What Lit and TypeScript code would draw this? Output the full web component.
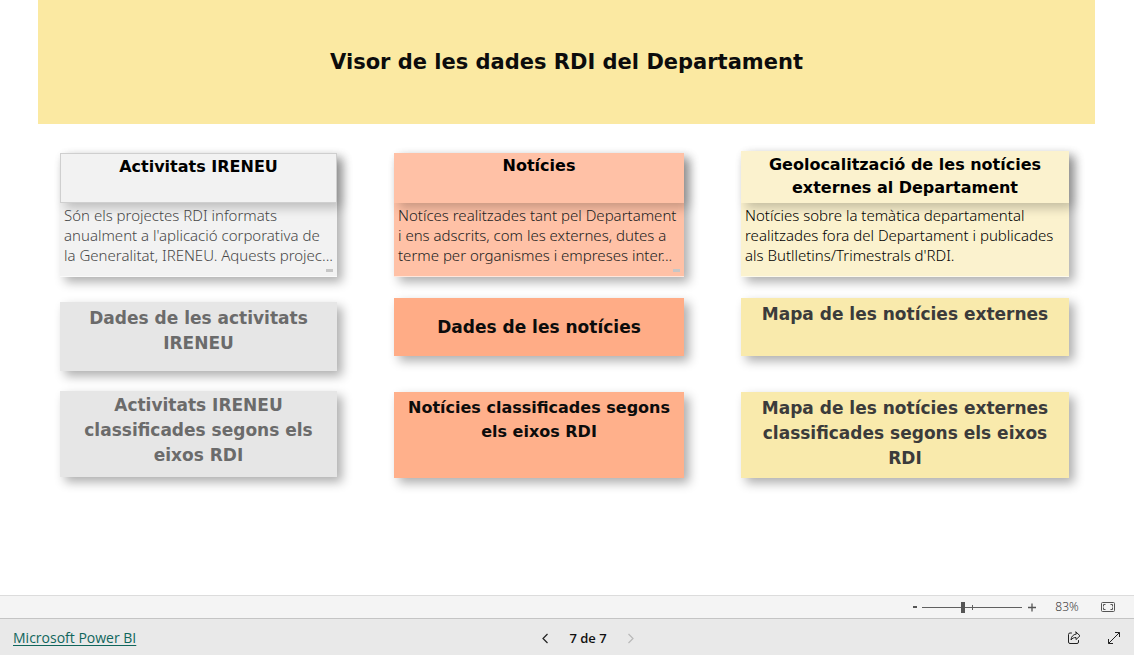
import { LitElement, html, css, svg } from "lit";
import { customElement, property, state } from "lit/decorators.js";
import { classMap } from "lit/directives/class-map.js";

interface Topic {
  tone: string;
  title: string;
  text: string;
  clipped: boolean;
  pages: string[];
}

const TOPICS: Topic[] = [
  {
    tone: "grey",
    title: "Activitats IRENEU",
    text: "Són els projectes RDI informats\nanualment a l'aplicació corporativa de\nla Generalitat, IRENEU. Aquests projec...",
    clipped: true,
    pages: ["Dades de les activitats IRENEU", "Activitats IRENEU classificades segons els eixos RDI"],
  },
  {
    tone: "orange",
    title: "Notícies",
    text: "Notíces realitzades tant pel Departament\ni ens adscrits, com les externes, dutes a\nterme per organismes i empreses inter...",
    clipped: true,
    pages: ["Dades de les notícies", "Notícies classificades segons els eixos RDI"],
  },
  {
    tone: "yellow",
    title: "Geolocalització de les notícies externes al Departament",
    text: "Notícies sobre la temàtica departamental\nrealitzades fora del Departament i publicades\nals Butlletins/Trimestrals d'RDI.",
    clipped: false,
    pages: ["Mapa de les notícies externes", "Mapa de les notícies externes classificades segons els eixos RDI"],
  },
];

@customElement("topic-column")
class TopicColumn extends LitElement {
  @property({ attribute: false }) topic!: Topic;

  static styles = css`
    :host { display: block; min-width: 0; }
    .column { display: flex; flex-direction: column; height: 100%; }
    .summary, .page { box-shadow: 5px 5px 10px rgba(0, 0, 0, 0.32); }
    .summary { display: flex; flex-direction: column; margin-top: 2px; border-bottom: 1px solid rgba(255, 255, 255, 0.6); }
    .title {
      position: relative;
      box-sizing: border-box;
      margin: 0;
      min-height: 50px;
      padding: 2px 12px;
      text-align: center;
      font: 700 16px/23px "DejaVu Sans", Verdana, sans-serif;
      color: #000;
      box-shadow: 5px 5px 10px rgba(0, 0, 0, 0.22);
    }
    .text {
      margin: 0;
      padding: 2px 0 0 4px;
      font: 300 15px/20px "Noto Sans", "Segoe UI", sans-serif;
      white-space: pre-line;
    }
    .foot { display: flex; justify-content: flex-end; height: 11px; padding: 0 4px; }
    .mark { width: 7px; height: 3px; margin-top: 4px; background: #c6c6c6; }
    .page {
      display: flex;
      align-items: flex-start;
      justify-content: center;
      width: 100%;
      border: 0;
      padding: 4px 16px;
      text-align: center;
      font: 700 17px/25px "DejaVu Sans", Verdana, sans-serif;
      cursor: pointer;
    }
    .first { margin-top: 21px; height: 58px; }
    .second { margin-top: 36px; height: 86px; }

    .grey .summary { background: #f2f2f2; }
    .grey .title { background: #f2f2f2; border: 1px solid #cfcfcf; padding: 1px 12px; }
    .grey .text { color: #484848; }
    .grey .page { background: #e6e6e6; color: #6b6b6b; }
    .grey .first { margin-top: 25px; height: 69px; }
    .grey .second { margin-top: 20px; padding-top: 2px; }

    .orange .summary, .orange .title { background: #ffc1a6; }
    .orange .title { padding-top: 1px; }
    .orange .text { color: #222; }
    .orange .page { background: #ffac86; color: #0c0c0c; }
    .orange .first { align-items: center; }
    .orange .second { padding: 4px 8px; background: #ffb08b; font-size: 16px; line-height: 24px; }

    .yellow .summary { margin-top: 0; background: #fbf2ce; }
    .yellow .title { min-height: 52px; background: #fbf2ce; }
    .yellow .text { color: #000; }
    .yellow .page { background: #f9eaac; color: #3b3b3b; }
  `;

  render() {
    const t = this.topic;
    return html`
      <section class=${classMap({ column: true, [t.tone]: true })}>
        <div class="summary">
          <h2 class="title">${t.title}</h2>
          <p class="text">${t.text}</p>
          <div class="foot">${t.clipped ? html`<span class="mark"></span>` : ""}</div>
        </div>
        <button class="page first">${t.pages[0]}</button>
        <button class="page second">${t.pages[1]}</button>
      </section>
    `;
  }
}

const chevronLeft = svg`<path d="M7.500 2 3 6.500l4.500 4.500" />`;
const chevronRight = svg`<path d="M3.500 2 8 6.500 3.500 11" />`;

@customElement("app-root")
class AppRoot extends LitElement {
  @state() private zoom = 83;

  static styles = css`
    :host {
      display: flex;
      flex-direction: column;
      min-height: 100vh;
      background: #fff;
      font: 14px/20px "Open Sans", "Segoe UI", sans-serif;
    }
    .report { flex: 1; padding: 0 39px 0 38px; }
    .banner { display: flex; align-items: center; justify-content: center; height: 124px; background: #fbe9a2; }
    .banner h1 { margin: 0; font: 700 21px/28px "DejaVu Sans", Verdana, sans-serif; color: #0c0c0c; }
    .topics { display: grid; grid-template-columns: 277fr 290fr 328fr; gap: 57px; padding: 27px 26px 24px 22px; }
    button { font: inherit; }

    .zoombar {
      display: flex;
      align-items: center;
      justify-content: flex-end;
      height: 22px;
      padding-right: 18px;
      border-top: 1px solid #dcdcdc;
      background: #f4f4f4;
      color: #555;
    }
    .icon { display: flex; align-items: center; justify-content: center; padding: 0; border: 0; background: none; color: #222; cursor: pointer; }
    .step { width: 10px; height: 20px; color: #555; }
    .track { position: relative; display: flex; width: 100px; margin: 0 5px 0 2px; }
    .track::after { content: ""; position: absolute; left: 50px; top: 8px; width: 1px; height: 5px; background: #606060; }
    input { appearance: none; width: 100%; height: 20px; margin: 0; background: none; }
    input::-webkit-slider-runnable-track { height: 1px; background: #606060; }
    input::-webkit-slider-thumb { appearance: none; width: 4px; height: 11px; margin-top: -5px; background: #555; }
    .percent { width: 40px; margin: 0 14px 0 10px; text-align: center; font-size: 12px; font-weight: 300; color: #222; }

    .footer {
      display: grid;
      grid-template-columns: 1fr auto 1fr;
      align-items: center;
      height: 34px;
      padding: 2px 13px 0;
      border-top: 1px solid #c4c4c4;
      background: #e9e9e9;
    }
    .brand { color: #10665c; justify-self: start; text-underline-offset: 2px; }
    .pager { display: flex; align-items: center; gap: 18px; padding-left: 42px; }
    .count { font-size: 13px; font-weight: 600; color: #111; }
    .icon:disabled { color: #b9b9b9; }
    .tools { display: flex; justify-content: flex-end; gap: 26px; }
    svg { display: block; fill: none; stroke: currentColor; }
  `;

  private onZoom(e: Event) {
    this.zoom = Math.round(Number((e.target as HTMLInputElement).value) * 2);
  }

  render() {
    return html`
      <main class="report">
        <header class="banner"><h1>Visor de les dades RDI del Departament</h1></header>
        <div class="topics">
          ${TOPICS.map((t) => html`<topic-column .topic=${t}></topic-column>`)}
        </div>
      </main>
      <div class="zoombar">
        <button class="icon step" aria-label="Redueix">
          <svg width="10" height="10" viewBox="0 0 10 10"><path d="M3 5h4" stroke-width="2" /></svg>
        </button>
        <span class="track">
          <input type="range" min="0" max="100" value="41" aria-label="Zoom" @input=${this.onZoom} />
        </span>
        <button class="icon step" aria-label="Amplia">
          <svg width="10" height="10" viewBox="0 0 10 10"><path d="M1 5.500h8M5 1.500v8" stroke-width="1.300" /></svg>
        </button>
        <span class="percent">${this.zoom}%</span>
        <button class="icon" aria-label="Ajusta a la pàgina">
          <svg width="15" height="12" viewBox="0 0 15 12">
            <rect x=".5" y="1.500" width="13" height="9" rx="1" stroke="#555" />
            <path d="M4.500 3.500h-2v2M2.500 6.500v2h2M9.500 3.500h2v2M11.500 6.500v2h-2" stroke="#555" />
          </svg>
        </button>
      </div>
      <footer class="footer">
        <a class="brand" href="#">Microsoft Power BI</a>
        <nav class="pager">
          <button class="icon" aria-label="Anterior">
            <svg width="11" height="13" viewBox="0 0 11 13" stroke-width="1.200">${chevronLeft}</svg>
          </button>
          <span class="count">7 de 7</span>
          <button class="icon" aria-label="Següent" disabled>
            <svg width="11" height="13" viewBox="0 0 11 13" stroke-width="1.200">${chevronRight}</svg>
          </button>
        </nav>
        <div class="tools">
          <button class="icon" aria-label="Comparteix">
            <svg width="14" height="14" viewBox="0 0 14 14" stroke="#000" stroke-linejoin="round" stroke-linecap="round">
              <path d="M4.500 2H3a1.500 1.500 0 0 0-1.500 1.500v7.500A1.500 1.500 0 0 0 3 12.500h7a1.500 1.500 0 0 0 1.500-1.500V9.500" />
              <path d="M9 1l4 3.800-4 3.800V6.500C7 6.400 5.300 7.200 4 9c.2-3.300 2-5.500 5-5.900z" />
            </svg>
          </button>
          <button class="icon" aria-label="Pantalla completa">
            <svg width="14" height="14" viewBox="0 0 14 14" stroke="#000"><path d="M1.500 12.500l11-11M8 1.500h4.500V6M1.500 8v4.500H6" /></svg>
          </button>
        </div>
      </footer>
    `;
  }
}
